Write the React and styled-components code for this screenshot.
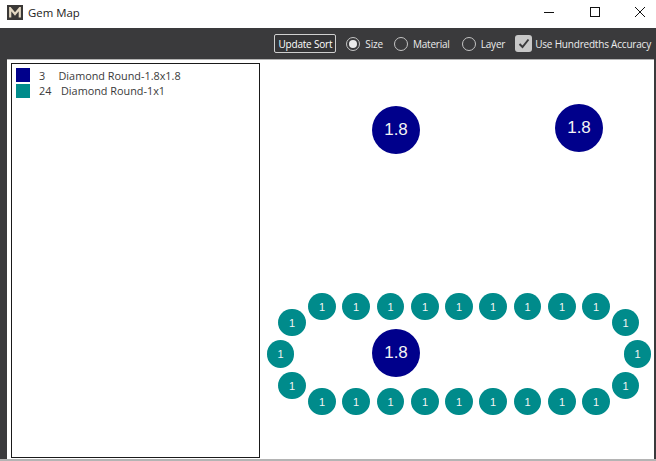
import React from 'react';
import styled, { createGlobalStyle } from 'styled-components';

const GlobalStyle = createGlobalStyle`
  html, body {
    margin: 0;
    padding: 0;
    background: #ffffff;
    overflow: hidden;
  }
  * {
    box-sizing: border-box;
  }
`;

const Window = styled.div`
  width: 656px;
  height: 461px;
  display: flex;
  flex-direction: column;
  font-family: "Open Sans", "Liberation Sans", sans-serif;
  background: #ffffff;
`;

const TitleBar = styled.div`
  height: 28px;
  display: flex;
  align-items: center;
  padding: 0 11px 4px 7px;
  background: #ffffff;
  color: #222222;
`;

const AppLogo = styled.div`
  width: 16px;
  height: 15px;
  margin-top: 1px;
  background: #3a3836;
  display: flex;
  align-items: center;
  justify-content: center;
`;

const Title = styled.span`
  margin-left: 5px;
  font-size: 11.4px;
  flex: 1;
`;

const WindowButtons = styled.div`
  display: flex;
  gap: 35.5px;

  svg {
    display: block;
  }
`;

const Toolbar = styled.div`
  height: 31px;
  background: #3a3a3c;
  display: flex;
  align-items: center;
  justify-content: flex-end;
  padding-right: 5px;
  color: #ececec;
  font-size: 10px;
  letter-spacing: -0.2px;
`;

const SortButton = styled.button`
  width: 62px;
  height: 19px;
  padding: 0;
  margin-right: 10px;
  border: 1px solid #cfcfcf;
  border-radius: 2px;
  background: #343436;
  color: #ffffff;
  font: inherit;
  letter-spacing: inherit;
`;

const RadioOption = styled.label`
  display: flex;
  align-items: center;
  gap: 5px;
  margin-right: ${props => props.$gap}px;
`;

const RadioCircle = styled.span`
  width: 14px;
  height: 14px;
  border-radius: 50%;
  border: 1px solid #c4c4c4;
  display: flex;
  align-items: center;
  justify-content: center;

  &::after {
    content: '';
    display: ${props => props.$checked ? 'block' : 'none'};
    width: 8px;
    height: 8px;
    border-radius: 50%;
    background: #ececec;
  }
`;

const CheckOption = styled.label`
  display: flex;
  align-items: center;
  gap: 3px;
`;

const CheckBox = styled.span`
  width: 17px;
  height: 17px;
  border-radius: 3px;
  background: #c8c8c8;
  display: flex;
  align-items: center;
  justify-content: center;
`;

const Body = styled.div`
  flex: 1;
  display: flex;
  background: #ffffff;
  border-top: 1px solid #b4b4b4;
  border-bottom: 2px solid #b4b4b4;
`;

const Gutter = styled.div`
  width: ${props => props.$width}px;
  margin-top: -1px;
  background: #3a3a3c;
`;

const Legend = styled.div`
  width: 249px;
  height: 395px;
  margin: 3px 0 0 4px;
  border: 1px solid #1a1a1a;
  padding: 4px;
  flex-shrink: 0;
`;

const LegendRow = styled.div`
  height: 14px;
  margin-bottom: 1.5px;
  display: flex;
  align-items: center;
  color: #3a3a3a;
  font-size: 10.85px;
`;

const Swatch = styled.span`
  width: 14px;
  height: 14px;
  background: ${props => props.$color};
`;

const Count = styled.span`
  margin-left: 9px;
  width: ${props => props.$width}px;
`;

const Board = styled.div`
  position: relative;
  flex: 1;
`;

const Gem = styled.div`
  position: absolute;
  left: ${props => props.$x - 260 - props.$d / 2}px;
  top: ${props => props.$y - 60 - props.$d / 2}px;
  width: ${props => props.$d}px;
  height: ${props => props.$d}px;
  border-radius: 50%;
  background: ${props => props.$color};
  color: #f4f4f4;
  font-family: "Liberation Sans", sans-serif;
  font-size: ${props => props.$size}px;
  display: flex;
  align-items: center;
  justify-content: center;
`;

const NAVY = '#00008b';
const TEAL = '#008b8b';

const largeGems = [[396, 130], [579, 128], [396, 353]];

const rowX = [322, 356, 390.5, 425, 459, 493, 527.5, 562, 596];

const smallGems = [
  ...rowX.map(x => [x, 306.5]),
  ...rowX.map(x => [x, 401.5]),
  [292, 322.5], [280.5, 354], [292, 385.5],
  [625.5, 322.5], [637.5, 354], [625.5, 385.5],
];

function App() {
  return (
    <Window>
      <GlobalStyle />
      <TitleBar>
        <AppLogo>
          <svg width="12" height="11" viewBox="0 0 12 11">
            <path d="M1.2 10.5V1.2L6 7l4.8-5.8v9.3" fill="none" stroke="#e4d8c2" strokeWidth="2.2" />
          </svg>
        </AppLogo>
        <Title>Gem Map</Title>
        <WindowButtons>
          <svg width="10" height="10" viewBox="0 0 10 10">
            <path d="M0 5.5H10" stroke="#111" fill="none" />
          </svg>
          <svg width="10" height="10" viewBox="0 0 10 10">
            <rect x="0.5" y="0.5" width="9" height="9" stroke="#111" fill="none" />
          </svg>
          <svg width="10" height="10" viewBox="0 0 10 10">
            <path d="M0 0L10 10M10 0L0 10" stroke="#111" fill="none" />
          </svg>
        </WindowButtons>
      </TitleBar>
      <Toolbar>
        <SortButton>Update Sort</SortButton>
        <RadioOption $gap={11}>
          <RadioCircle $checked />
          Size
        </RadioOption>
        <RadioOption $gap={12}>
          <RadioCircle />
          Material
        </RadioOption>
        <RadioOption $gap={10}>
          <RadioCircle />
          Layer
        </RadioOption>
        <CheckOption>
          <CheckBox>
            <svg width="12" height="11" viewBox="0 0 12 11">
              <path d="M1.5 6L4.5 9L10.5 1.5" fill="none" stroke="#3a3a3c" strokeWidth="2" />
            </svg>
          </CheckBox>
          Use Hundredths Accuracy
        </CheckOption>
      </Toolbar>
      <Body>
        <Gutter $width={7} />
        <Legend>
          <LegendRow>
            <Swatch $color={NAVY} />
            <Count $width={19.5}>3</Count>
            Diamond Round-1.8x1.8
          </LegendRow>
          <LegendRow>
            <Swatch $color={TEAL} />
            <Count $width={22}>24</Count>
            Diamond Round-1x1
          </LegendRow>
        </Legend>
        <Board>
          {largeGems.map(([x, y]) => (
            <Gem key={`${x}-${y}`} $x={x} $y={y} $d={48} $size={17} $color={NAVY}>1.8</Gem>
          ))}
          {smallGems.map(([x, y]) => (
            <Gem key={`${x}-${y}`} $x={x} $y={y} $d={27.5} $size={11} $color={TEAL}>1</Gem>
          ))}
        </Board>
        <Gutter $width={2} />
      </Body>
    </Window>
  );
}

export default App;
